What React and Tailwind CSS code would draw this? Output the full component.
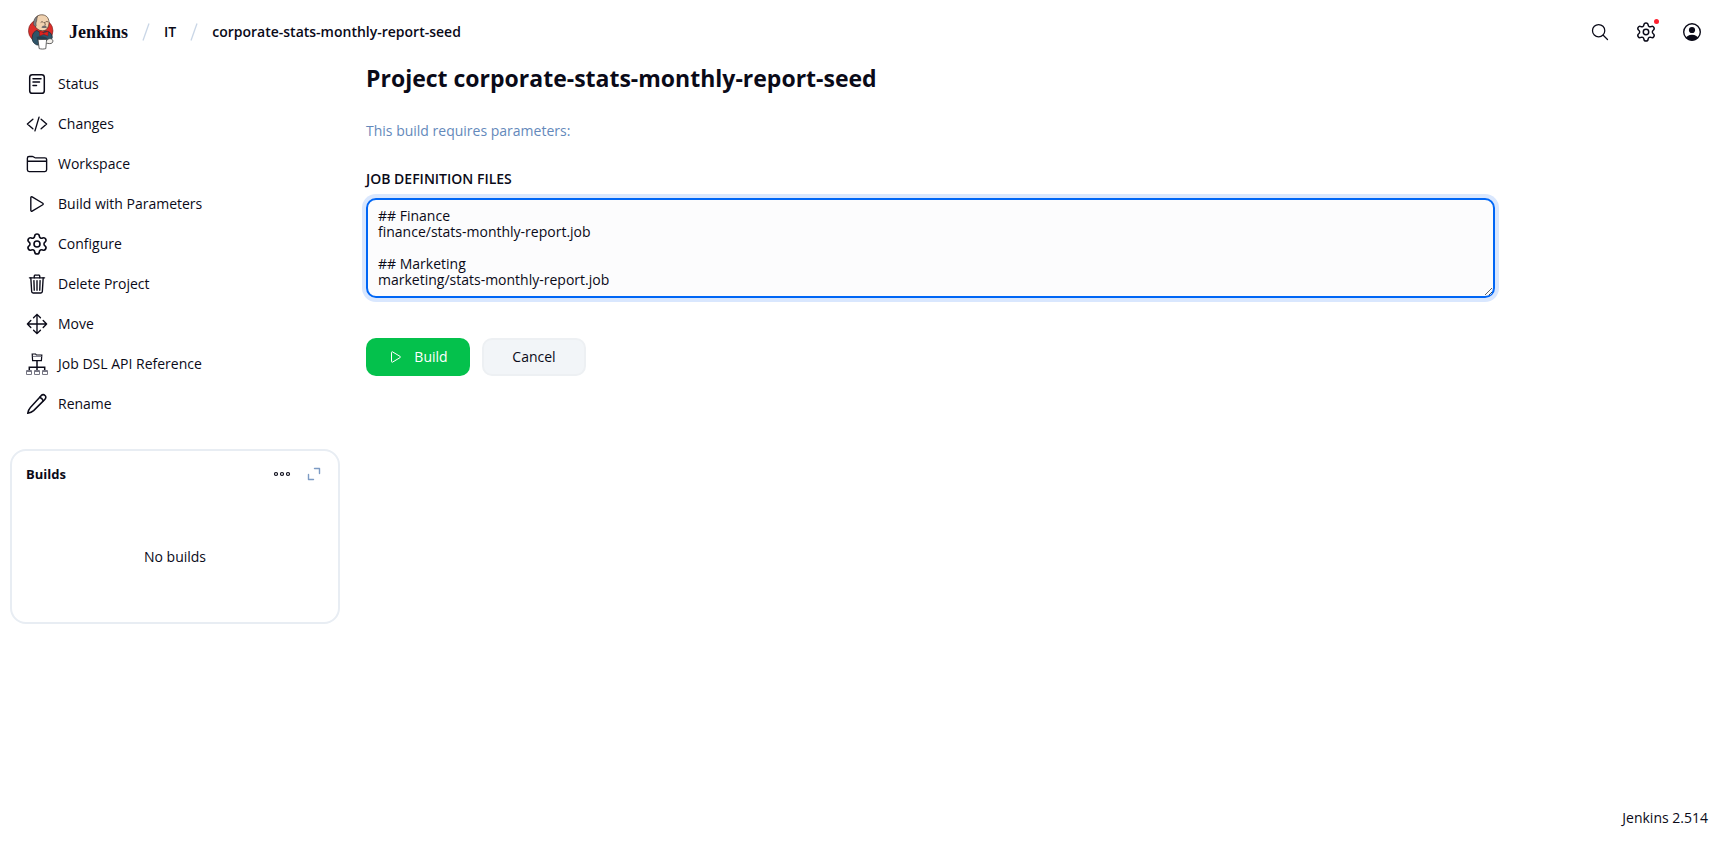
import React from "react";
import {
  IoSearchOutline,
  IoCodeSlashOutline,
  IoFolderOutline,
  IoPlayOutline,
  IoTrashOutline,
  IoMoveOutline,
} from "react-icons/io5";
import { Settings } from "lucide-react";

function JenkinsLogo({ className }) {
  return (
    <svg viewBox="0 0 26 36" className={className} aria-hidden="true">
      <ellipse cx="12.7" cy="16.8" rx="12.3" ry="11.8" fill="#dc2e2a" stroke="#5c1a18" strokeWidth=".5" />
      <path d="M4.200 23.500C4.200 19.500 6.400 17.200 9 16.400l4.200 3.200 4.600-2.600c3.600.2 6 2.400 6.600 6.200l-1.600 3.600-3.800 1.600-5 2.600H9C5.400 29.600 4 27 4.200 23.500Z" fill="#2f5468" stroke="#1a2a33" strokeWidth=".7" />
      <path d="M6.400 8.400C6.800 3.200 9.800.8 13.700.8c4.200 0 7 2.600 7.300 7.200.2 4.400-2 8.800-6.400 8.800-4.200 0-6.800-2.600-7.500-5.200Z" fill="#f0d2b0" stroke="#49362b" strokeWidth=".7" />
      <path d="M6.600 12c-1-.8-1.400-2.200-1-3.600.2-3 1.800-5.200 4-6.400-.8 2-.6 3.600-1 5-.8 1.600-.6 3.200-.4 4.800l-.6 1Z" fill="#7b7f86" stroke="#49362b" strokeWidth=".5" />
      <path d="M13 8.200c.6-.6 1.600-.6 2.200 0M17.800 7.800c.6-.5 1.400-.5 2 0M16.600 8.400c.2 1.400 1.200 2.200.4 3" fill="none" stroke="#49362b" strokeWidth=".8" strokeLinecap="round" />
      <path d="M13.400 13.400c.8-1.600 2-2 3-1.500 1-.5 2 0 2.600 1.500-1.600.9-4 .9-5.600 0Z" fill="#6d6b6d" />
      <path d="m11.600 17 4.200 2.100 4.400-1.900-.2 4.800-4.200-1.700-4.200 1.700Z" fill="#e0231f" stroke="#81100c" strokeWidth=".4" />
      <path d="M8.600 23c2.800-1 5.800-.8 9.800.4l1.600 2-10.400 1.200Z" fill="#243f4e" />
      <path d="m10 25.600 8.600-.2-.8 9.200c-2 .6-4.600.6-6.600 0Z" fill="#fff" stroke="#3c3c3c" strokeWidth=".8" />
      <path d="M19 26.200c1.800-2.200 5.200-1.800 5.800.2.4 2-1 3.400-3 3.200-1.200 0-2.600-.2-3.400-.6" fill="#f4f1ec" stroke="#3c3c3c" strokeWidth=".8" />
    </svg>
  );
}

function StatusIcon({ className }) {
  return (
    <svg viewBox="0 0 22 22" className={className} fill="none" stroke="currentColor" strokeWidth="1.500" strokeLinecap="round" aria-hidden="true">
      <rect x="3.700" y="1.700" width="14.600" height="18.600" rx="2.600" />
      <path d="M7 5.700h8M7 9h6.500M7 12.400h3.500" />
    </svg>
  );
}

function TreeIcon({ className }) {
  return (
    <svg viewBox="0 0 22 22" className={className} fill="none" stroke="currentColor" strokeWidth="1" aria-hidden="true">
      <path d="M6.600 7.600 6.200 1h3.400l.8 1h5.400l-.4 5.600Z" strokeWidth="1.200" />
      <path d="M6.800 3.400h8.800" stroke="#777784" />
      <path d="M11 7.600V18M3.300 17.500v-3.300h15.400v3.300" strokeWidth="1.500" />
      <g stroke="#777784">
        <path d="M.5 17.500h5v4h-5ZM8.500 17.500h5v4h-5ZM16.500 17.500h5v4h-5Z" />
        <path d="M1 18.500h4M9 18.500h4M17 18.500h4" />
      </g>
    </svg>
  );
}

function PencilIcon({ className }) {
  return (
    <svg viewBox="0 0 22 22" className={className} fill="none" stroke="currentColor" strokeWidth="1.500" strokeLinecap="round" strokeLinejoin="round" aria-hidden="true">
      <path d="M14.900 2.900c1.200-1.200 3-1.500 4.100-.4s.8 2.900-.4 4.100L7.600 17.600c-1.600 1.500-3.700 2.300-5.900 2.700.4-2.200 1.200-4.300 2.700-5.900Z" />
      <path d="M13.700 4.300c1.600.6 2.900 1.900 3.500 3.500" />
    </svg>
  );
}

function GearIcon({ className }) {
  return (
    <svg viewBox="1 1 22 22" className={className} aria-hidden="true">
      <Settings width="24" height="24" strokeWidth={1.6} />
    </svg>
  );
}

function UserIcon({ className }) {
  return (
    <svg viewBox="0 0 20 20" className={className} aria-hidden="true">
      <defs>
        <clipPath id="user-disc">
          <circle cx="10" cy="10" r="8.600" />
        </clipPath>
      </defs>
      <circle cx="10" cy="10" r="8.300" fill="none" stroke="currentColor" strokeWidth="1.400" />
      <circle cx="10" cy="8" r="3.100" fill="currentColor" />
      <ellipse cx="10" cy="17" rx="6.200" ry="4.200" fill="currentColor" clipPath="url(#user-disc)" />
    </svg>
  );
}

const tasks = [
  { label: "Status", Icon: StatusIcon },
  { label: "Changes", Icon: IoCodeSlashOutline },
  { label: "Workspace", Icon: IoFolderOutline },
  { label: "Build with Parameters", Icon: IoPlayOutline },
  { label: "Configure", Icon: GearIcon },
  { label: "Delete Project", Icon: IoTrashOutline },
  { label: "Move", Icon: IoMoveOutline },
  { label: "Job DSL API Reference", Icon: TreeIcon },
  { label: "Rename", Icon: PencilIcon },
];

function Separator() {
  return (
    <svg viewBox="0 0 8 18" className="h-[18px] w-2" aria-hidden="true">
      <path d="M7 .5 1 17.500" stroke="#c9d6e6" strokeWidth="1.300" />
    </svg>
  );
}

function Header() {
  return (
    <header className="flex h-16 items-center justify-between pr-[34px] pl-7">
      <nav aria-label="Breadcrumb" className="flex items-center font-semibold">
        <a href="#" className="flex items-center gap-[15px]">
          <JenkinsLogo className="h-9 w-[26px]" />
          <span className="font-['Liberation_Serif',serif] text-[18px] font-bold">Jenkins</span>
        </a>
        <div className="ml-3.5 flex items-center gap-3.5">
          <Separator />
          <a href="#">IT</a>
          <Separator />
          <a href="#">corporate-stats-monthly-report-seed</a>
        </div>
      </nav>
      <div className="flex items-center gap-[26px]">
        <button type="button" aria-label="Search">
          <IoSearchOutline className="size-5" />
        </button>
        <button type="button" aria-label="Manage Jenkins" className="relative">
          <GearIcon className="size-5" />
          <span className="absolute -top-[3px] -right-[3px] size-[5px] rounded-full bg-[#ff1f2d]" />
        </button>
        <button type="button" aria-label="User">
          <UserIcon className="size-5" />
        </button>
      </div>
    </header>
  );
}

function Sidebar() {
  return (
    <aside className="w-[330px] shrink-0">
      <nav aria-label="Tasks">
        {tasks.map(({ label, Icon }) => (
          <a key={label} href="#" className="flex h-10 items-center gap-2.5 px-4">
            <Icon className="size-[22px]" />
            {label}
          </a>
        ))}
      </nav>
      <section className="mt-[25px] rounded-2xl border-2 border-[#e8edf3]">
        <div className="flex h-[46px] items-center justify-between pr-[17px] pl-3.5">
          <h2 className="text-[13px] font-bold">Builds</h2>
          <div className="flex items-center gap-4">
            <button type="button" aria-label="More actions">
              <svg viewBox="0 0 18 6" className="h-1.5 w-[18px]" fill="none" stroke="currentColor" strokeWidth="1.200">
                <circle cx="3" cy="3" r="1.500" />
                <circle cx="9" cy="3" r="1.500" />
                <circle cx="15" cy="3" r="1.500" />
              </svg>
            </button>
            <button type="button" aria-label="Expand" className="text-[#7d9bc4]">
              <svg viewBox="0 0 14 14" className="size-3.5" fill="none" stroke="currentColor" strokeWidth="1.400" strokeLinecap="round" strokeLinejoin="round">
                <path d="M7.500 1.500h5v5M6.500 12.500h-5v-5" />
              </svg>
            </button>
          </div>
        </div>
        <p className="flex h-[125px] items-center justify-center pb-1.5">No builds</p>
      </section>
    </aside>
  );
}

function BuildForm() {
  return (
    <main className="min-w-0 max-w-[1129px] grow">
      <h1 className="text-[23px] leading-7 font-bold">Project corporate-stats-monthly-report-seed</h1>
      <p className="mt-[29px] text-[#6489bb]">This build requires parameters:</p>
      <form className="mt-7" onSubmit={(e) => e.preventDefault()}>
        <label htmlFor="definitions" className="block font-semibold">
          JOB DEFINITION FILES
        </label>
        <textarea
          id="definitions"
          rows={5}
          spellCheck={false}
          className="mt-[9px] block w-full rounded-[10px] border-2 border-[#0066f5] bg-[#fcfcfd] px-2.5 py-2 leading-4 ring-4 ring-[#d9e7fe] outline-none"
          defaultValue={"## Finance\nfinance/stats-monthly-report.job\n\n## Marketing\nmarketing/stats-monthly-report.job"}
        />
        <div className="mt-10 flex gap-3">
          <button type="submit" className="flex h-[38px] w-[104px] items-center justify-center gap-2.5 rounded-[10px] bg-[#04c14c] text-white">
            <IoPlayOutline className="size-4" />
            Build
          </button>
          <button type="button" className="h-[38px] w-[104px] rounded-[10px] border-2 border-[#edf0f3] bg-[#f2f5f8]">
            Cancel
          </button>
        </div>
      </form>
    </main>
  );
}

export default function App() {
  return (
    <div className="flex min-h-screen flex-col bg-white font-['Open_Sans','Noto_Sans',sans-serif] text-[14px] leading-5 text-[#0a0a18]">
      <Header />
      <div className="flex grow gap-[26px] px-2.5">
        <Sidebar />
        <BuildForm />
      </div>
      <footer className="flex justify-end px-7 py-5">
        <a href="#">Jenkins 2.514</a>
      </footer>
    </div>
  );
}
